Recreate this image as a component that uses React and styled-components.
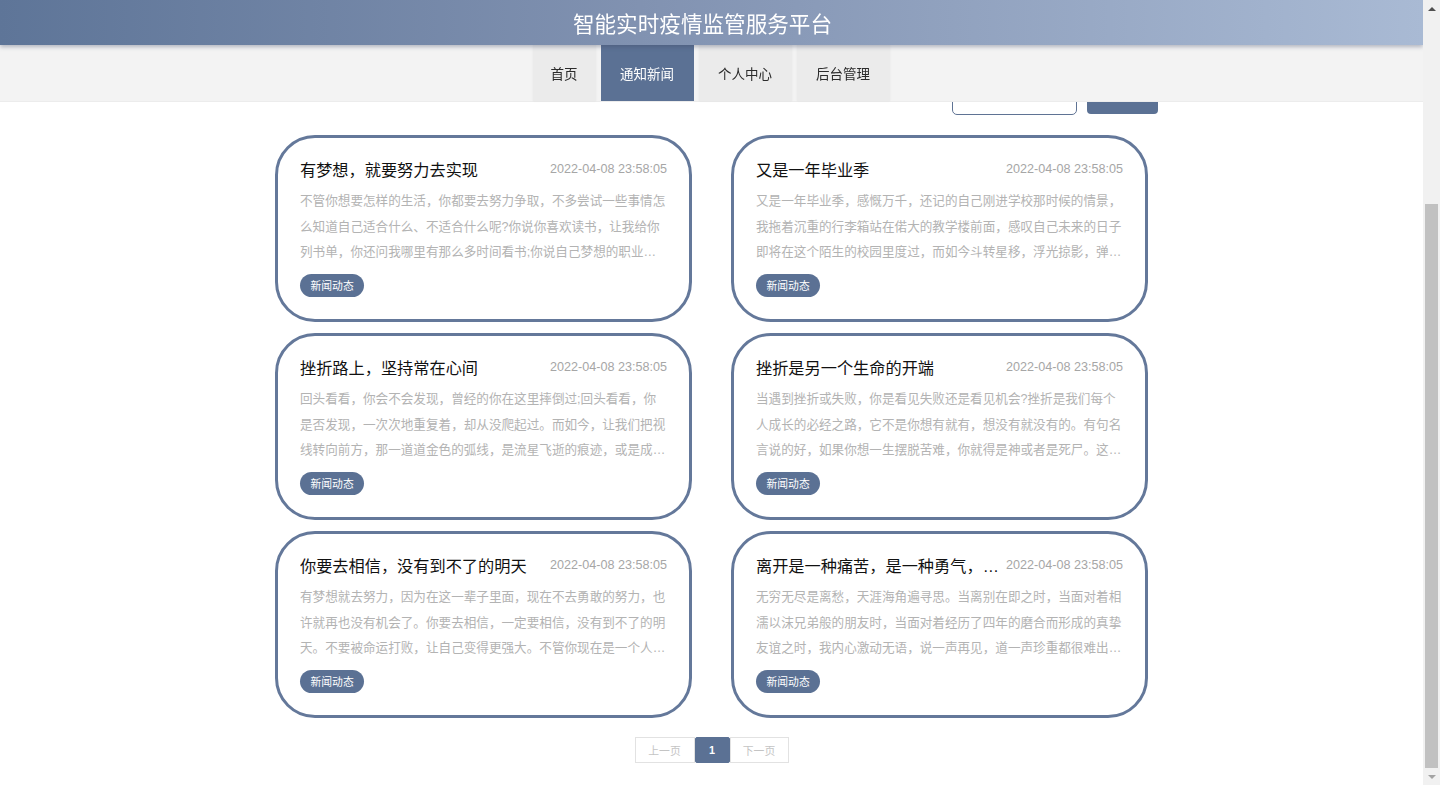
import { useLayoutEffect, useRef, useState } from 'react';
import styled, { createGlobalStyle } from 'styled-components';

const GlobalStyle = createGlobalStyle`
  html, body {
    margin: 0;
    padding: 0;
    background: #fff;
    font-family: "Liberation Sans", "Noto Sans CJK SC", sans-serif;
    overflow: hidden;
  }
  * {
    box-sizing: border-box;
  }
`;

const Frame = styled.div`
  display: flex;
  height: 100vh;
`;

const Viewport = styled.div`
  flex: 1;
  min-width: 0;
  overflow-y: auto;
  scrollbar-width: none;

  &::-webkit-scrollbar {
    display: none;
  }
`;

const SHeader = styled.header`
  position: sticky;
  top: 0;
  z-index: 10;
`;

const TopBar = styled.div`
  height: 45px;
  display: flex;
  align-items: center;
  justify-content: center;
  padding-right: 18px;
  background: linear-gradient(90deg, #5e7598 0%, #8192b1 45%, #a9bad4 100%);
  box-shadow: 0 2px 4px rgba(60, 70, 100, 0.35);
  position: relative;
  z-index: 1;
`;

const Title = styled.h1`
  margin: 0;
  font-size: 21.6px;
  font-weight: normal;
  color: #fff;
`;

const NavBar = styled.nav`
  height: 57px;
  background: #f3f3f3;
  border-bottom: 1px solid #ececec;
  display: flex;
  justify-content: center;
  gap: 5px;
  padding-right: 1px;
`;

const NavItem = styled.a`
  display: flex;
  align-items: center;
  height: 56px;
  padding: 0 ${p => (p.$short ? '18px' : '19.5px')} 1px;
  font-size: 13.5px;
  color: ${p => (p.$active ? '#fff' : '#2b2b2b')};
  background: ${p => (p.$active ? '#5b7194' : '#ebebeb')};
  box-shadow: ${p => (p.$active ? 'none' : '0 0 2px rgba(0, 0, 0, 0.06)')};
  cursor: pointer;
`;

const Main = styled.main`
  width: 893px;
  margin: 0 auto;
  padding: 234px 0 22px;
`;

const SearchRow = styled.div`
  display: flex;
  justify-content: flex-end;
  align-items: flex-end;
  gap: 10px;
`;

const SearchInput = styled.input`
  width: 125px;
  height: 40px;
  border: 1px solid #5f7394;
  border-radius: 5px;
  outline: none;
  padding: 0 8px;
  font-family: inherit;
`;

const SearchButton = styled.button`
  width: 71px;
  height: 39px;
  margin-bottom: 1px;
  border: none;
  border-radius: 4px;
  background: #5b7194;
  color: #fff;
  font-family: inherit;
  font-size: 12.6px;
  padding-bottom: 14px;
`;

const Grid = styled.div`
  display: grid;
  grid-template-columns: 417px 417px;
  column-gap: 39px;
  row-gap: 11px;
  padding: 0 10px;
  margin-top: 20px;
`;

const Card = styled.article`
  height: 187px;
  border: 3px solid #64789a;
  border-radius: 40px;
  padding: 20px 22px 22px;
  background: #fff;
`;

const CardHead = styled.div`
  display: flex;
  align-items: center;
  gap: 6px;
  height: 22px;
`;

const CardTitle = styled.h3`
  flex: 1;
  min-width: 0;
  margin: 0;
  font-size: 16.2px;
  font-weight: normal;
  color: #111;
  white-space: nowrap;
  overflow: hidden;
  text-overflow: ellipsis;
`;

const CardDate = styled.span`
  flex-shrink: 0;
  font-size: 12.6px;
  color: #a6a6a6;
`;

const CardText = styled.p`
  margin: 9.4px 0 0;
  font-size: 12.6px;
  line-height: 25.2px;
  height: 75.6px;
  color: #b3b3b3;
  display: -webkit-box;
  -webkit-line-clamp: 3;
  -webkit-box-orient: vertical;
  overflow: hidden;
`;

const Tag = styled.span`
  display: inline-flex;
  align-items: center;
  margin-top: 9px;
  height: 23px;
  padding: 0 10.5px;
  border-radius: 12px;
  background: #5b7194;
  color: #fff;
  font-size: 10.8px;
`;

const Pager = styled.div`
  display: flex;
  justify-content: center;
  margin-top: 19px;
`;

const PageBtn = styled.span`
  display: flex;
  align-items: center;
  justify-content: center;
  height: 26px;
  width: ${p => p.$w}px;
  font-size: 10.8px;
  color: ${p => (p.$active ? '#fff' : '#c4c4c4')};
  font-weight: ${p => (p.$active ? 'bold' : 'normal')};
  background: ${p => (p.$active ? '#5b7194' : '#fff')};
  border: 1px solid ${p => (p.$active ? '#5b7194' : '#e2e2e2')};
  border-radius: ${p => (p.$active ? '2px' : '0')};
`;

const ScrollBar = styled.div`
  width: 17px;
  flex-shrink: 0;
  background: #f1f1f1;
  display: flex;
  flex-direction: column;
`;

const ScrollArrow = styled.div`
  height: 17px;
  display: flex;
  align-items: center;
  justify-content: center;

  &::before {
    content: '';
    border-left: 4px solid transparent;
    border-right: 4px solid transparent;
    ${p =>
      p.$down
        ? 'border-top: 4px solid #a3a3a3;'
        : 'border-bottom: 4px solid #505050;'}
  }
`;

const ScrollTrack = styled.div`
  flex: 1;
  position: relative;
`;

const ScrollThumb = styled.div`
  position: absolute;
  left: 2px;
  right: 2px;
  background: #c1c1c1;
`;

const navs = ['首页', '通知新闻', '个人中心', '后台管理'];

const news = [
  {
    title: '有梦想，就要努力去实现',
    text: '不管你想要怎样的生活，你都要去努力争取，不多尝试一些事情怎么知道自己适合什么、不适合什么呢?你说你喜欢读书，让我给你列书单，你还问我哪里有那么多时间看书;你说自己梦想的职业是广告文案，问我如何入门，要做好哪些准备。',
  },
  {
    title: '又是一年毕业季',
    text: '又是一年毕业季，感慨万千，还记的自己刚进学校那时候的情景，我拖着沉重的行李箱站在偌大的教学楼前面，感叹自己未来的日子即将在这个陌生的校园里度过，而如今斗转星移，浮光掠影，弹指一挥间，我们就要离开这里。',
  },
  {
    title: '挫折路上，坚持常在心间',
    text: '回头看看，你会不会发现，曾经的你在这里摔倒过;回头看看，你是否发现，一次次地重复着，却从没爬起过。而如今，让我们把视线转向前方，那一道道金色的弧线，是流星飞逝的痕迹，或是成功者留下的足迹。',
  },
  {
    title: '挫折是另一个生命的开端',
    text: '当遇到挫折或失败，你是看见失败还是看见机会?挫折是我们每个人成长的必经之路，它不是你想有就有，想没有就没有的。有句名言说的好，如果你想一生摆脱苦难，你就得是神或者是死尸。这句话说明了挫折是不可避免的。',
  },
  {
    title: '你要去相信，没有到不了的明天',
    text: '有梦想就去努力，因为在这一辈子里面，现在不去勇敢的努力，也许就再也没有机会了。你要去相信，一定要相信，没有到不了的明天。不要被命运打败，让自己变得更强大。不管你现在是一个人走在异乡的街道上。',
  },
  {
    title: '离开是一种痛苦，是一种勇气，但同样也是一个考验',
    text: '无穷无尽是离愁，天涯海角遍寻思。当离别在即之时，当面对着相濡以沫兄弟般的朋友时，当面对着经历了四年的磨合而形成的真挚友谊之时，我内心激动无语，说一声再见，道一声珍重都很难出口。',
  },
];

const App = () => {
  const viewRef = useRef(null);
  const [thumb, setThumb] = useState({ top: 183, height: 568 });

  useLayoutEffect(() => {
    const el = viewRef.current;
    el.scrollTop = el.scrollHeight;
    const track = el.clientHeight - 34;
    setThumb({
      top: (track * el.scrollTop) / el.scrollHeight,
      height: (track * el.clientHeight) / el.scrollHeight,
    });
  }, []);

  return (
    <Frame>
      <GlobalStyle />
      <Viewport ref={viewRef}>
        <SHeader>
          <TopBar>
            <Title>智能实时疫情监管服务平台</Title>
          </TopBar>
          <NavBar>
            {navs.map((nav, i) => (
              <NavItem key={nav} $active={i === 1} $short={i === 0}>
                {nav}
              </NavItem>
            ))}
          </NavBar>
        </SHeader>
        <Main>
          <SearchRow>
            <SearchInput />
            <SearchButton>搜索</SearchButton>
          </SearchRow>
          <Grid>
            {news.map(item => (
              <Card key={item.title}>
                <CardHead>
                  <CardTitle>{item.title}</CardTitle>
                  <CardDate>2022-04-08 23:58:05</CardDate>
                </CardHead>
                <CardText>{item.text}</CardText>
                <Tag>新闻动态</Tag>
              </Card>
            ))}
          </Grid>
          <Pager>
            <PageBtn $w={60}>上一页</PageBtn>
            <PageBtn $w={35} $active>1</PageBtn>
            <PageBtn $w={59}>下一页</PageBtn>
          </Pager>
        </Main>
      </Viewport>
      <ScrollBar>
        <ScrollArrow />
        <ScrollTrack>
          <ScrollThumb style={{ top: thumb.top, height: thumb.height }} />
        </ScrollTrack>
        <ScrollArrow $down />
      </ScrollBar>
    </Frame>
  );
};

export default App;
